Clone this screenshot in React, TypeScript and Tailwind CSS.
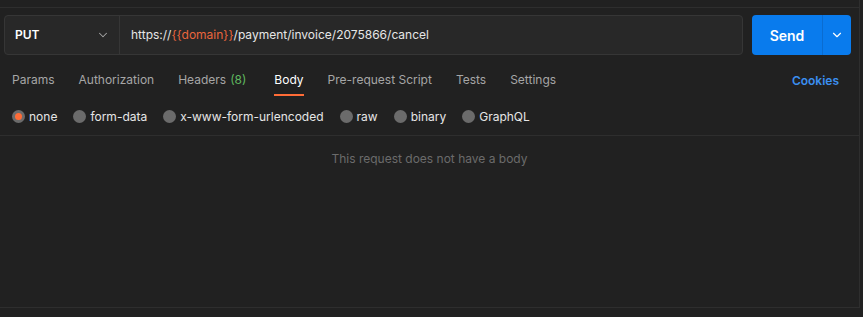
import { ChevronDown } from "lucide-react";

const tabs = [
  { label: "Params" },
  { label: "Authorization" },
  { label: "Headers", count: "(8)" },
  { label: "Body", active: true },
  { label: "Pre-request Script" },
  { label: "Tests" },
  { label: "Settings" },
];

const bodyTypes = ["none", "form-data", "x-www-form-urlencoded", "raw", "binary", "GraphQL"];

export default function App() {
  return (
    <div
      className="flex h-[317px] w-[863px] flex-col overflow-hidden bg-[#212121] text-[12px] text-[#a6a6a6]"
      style={{ fontFamily: "Inter, 'Noto Sans', sans-serif" }}
    >
      <div className="flex h-[308px] w-[860px] flex-col border-r border-b border-[#2e2e2e]">
        <div className="h-[8px] shrink-0 border-b border-[#2e2e2e]" />

        {/* request bar */}
        <div className="mt-[7px] flex h-[40px] shrink-0 items-stretch gap-[9px] pl-[4px]">
          <div className="flex w-[739px] items-stretch rounded-[4px] border border-[#363636] bg-[#282828]">
            <div className="flex w-[115px] items-center justify-between border-r border-[#363636] pl-[10px] pr-[9px]">
              <span className="font-semibold text-white">PUT</span>
              <ChevronDown className="h-[14px] w-[14px] text-[#a6a6a6]" strokeWidth={1.75} />
            </div>
            <div className="flex items-center pl-[11px] text-[#e6e6e6]">
              https://<span className="text-[#e8663d]">{"{{domain}}"}</span>/payment/invoice/2075866/cancel
            </div>
          </div>
          <div className="flex w-[99px] items-stretch rounded-[4px] bg-[#097bed] text-white">
            <div className="flex w-[71px] items-center justify-center border-r border-[#0a6cd0] text-[14px] font-semibold">
              Send
            </div>
            <div className="flex flex-1 items-center justify-center">
              <ChevronDown className="h-[14px] w-[14px]" strokeWidth={2} />
            </div>
          </div>
        </div>

        {/* tabs */}
        <div className="mt-[7px] flex h-[34px] shrink-0 items-stretch justify-between pl-[12px] pr-[20px]">
          <div className="flex items-stretch gap-[24px]">
            {tabs.map((t) => (
              <div
                key={t.label}
                className={
                  t.active
                    ? "flex items-center border-b-2 border-[#ff6c37] pt-[3px] text-white"
                    : "flex items-center border-b-2 border-transparent pt-[3px]"
                }
              >
                {t.label}
                {t.count && <span className="mr-[4px] ml-[4px] text-[#5fb75f]">{t.count}</span>}
              </div>
            ))}
          </div>
          <div className="flex items-center pt-[3px] font-semibold text-[#3b8ff0]">Cookies</div>
        </div>

        {/* body types */}
        <div className="flex h-[40px] shrink-0 items-center gap-[16px] border-b border-[#2e2e2e] pl-[12px] pt-[2px]">
          {bodyTypes.map((b, i) => (
            <label key={b} className="flex items-center gap-[4px] text-[#e6e6e6]">
              {i === 0 ? (
                <span className="flex h-[13px] w-[13px] items-center justify-center rounded-full bg-[#6b6b6b]">
                  <span className="h-[7px] w-[7px] rounded-full bg-[#ff6c37]" />
                </span>
              ) : (
                <span className="h-[13px] w-[13px] rounded-full bg-[#6b6b6b]" />
              )}
              {b}
            </label>
          ))}
        </div>

        <div className="flex h-[43px] items-center justify-center pt-[2px] text-[12px] text-[#6b6b6b]">
          This request does not have a body
        </div>
      </div>
    </div>
  );
}
